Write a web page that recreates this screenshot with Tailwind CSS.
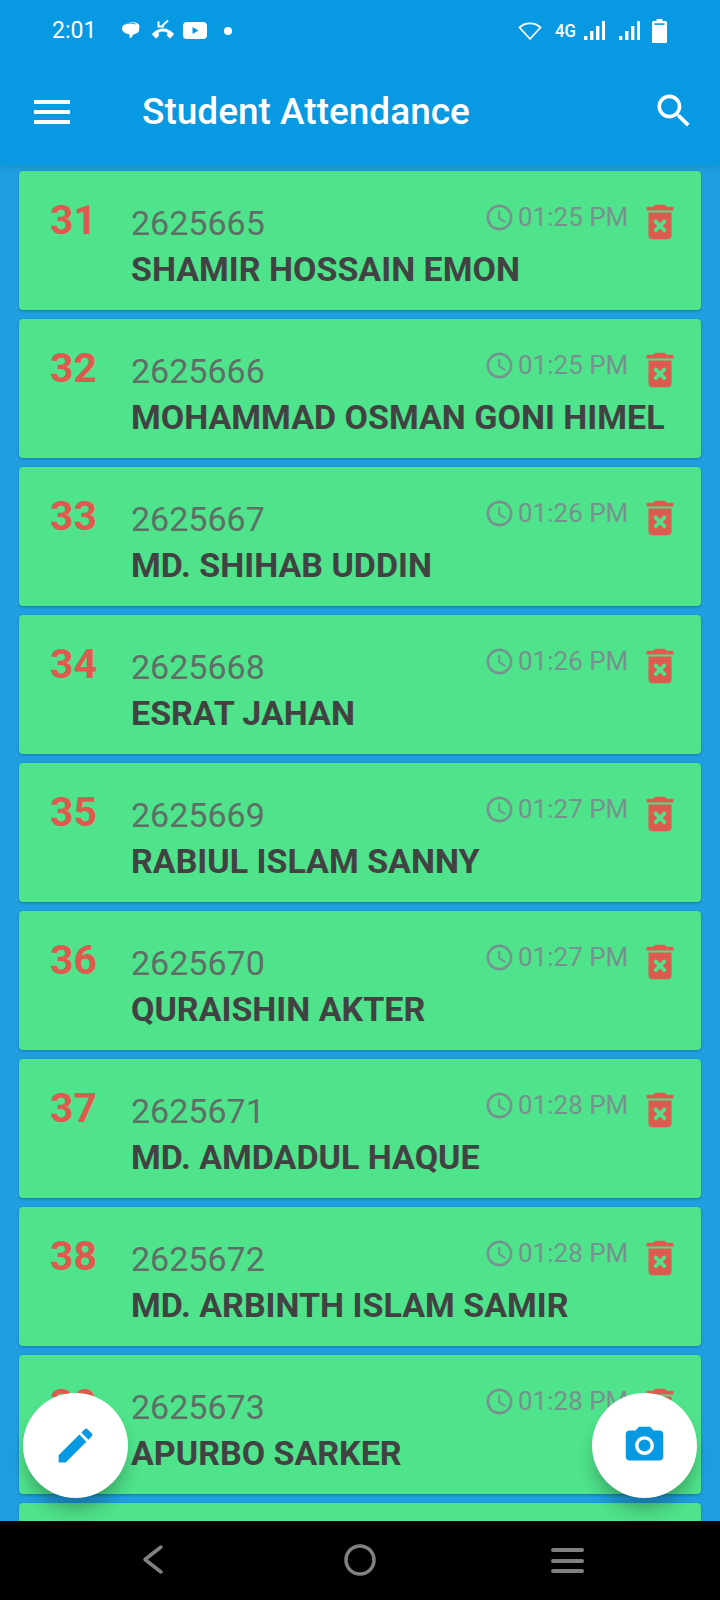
<!doctype html>
<html lang="en">
<head>
<meta charset="utf-8">
<title>Student Attendance</title>
<script src="https://cdn.jsdelivr.net/npm/@tailwindcss/browser@4"></script>
</head>
<body class="m-0">
<svg class="hidden" aria-hidden="true">
  <symbol id="clock" viewBox="0 0 24 24"><path d="M11.99 2C6.47 2 2 6.48 2 12s4.47 10 9.99 10C17.52 22 22 17.52 22 12S17.52 2 11.99 2zM12 20c-4.42 0-8-3.58-8-8s3.58-8 8-8 8 3.58 8 8-3.58 8-8 8zm.5-13H11v6l5.25 3.15.75-1.23-4.5-2.67z"/></symbol>
  <symbol id="trash" viewBox="0 0 24 24"><path d="M6 19c0 1.1.9 2 2 2h8c1.1 0 2-.9 2-2V7H6v12zm2.46-7.12l1.41-1.41L12 12.59l2.12-2.12 1.41 1.41L13.41 14l2.12 2.12-1.41 1.41L12 15.41l-2.12 2.12-1.41-1.41L10.59 14l-2.13-2.12zM15.5 4l-1-1h-5l-1 1H5v2h14V4z"/></symbol>
</svg>

<div class="relative flex h-[1600px] w-[720px] flex-col overflow-hidden bg-[#1f9fe2] font-['Roboto',sans-serif]">
  <!-- App bar with the system status row -->
  <header class="relative z-10 h-[165px] shrink-0 bg-[#0899e3] text-white shadow-[0_2px_6px_rgba(0,0,0,0.12)]">
    <div class="flex h-[60px] items-center justify-between pt-[1px] pl-[52px] pr-[53px]">
      <div class="flex items-center">
        <span class="w-[69px] text-[23px] leading-none">2:01</span>
        <svg class="h-[20px] w-[20px]" viewBox="0 0 20 20" fill="#fff"><path d="M9 1.5c4.6-.9 9 .6 9.5 3.6.2 1-.1 1.800-.6 2.500 1 3-1.500 5.300-5.400 5.800L9.800 17c-.6.5-1.100.3-1.100-.4l-.3-3.400C4 12.600 1 10.600 1 7.500 1 4.500 4.300 2.200 9 1.500z"/><path d="M4 3.200c2.500-1.300 7-1.600 10.500-.2" fill="none" stroke="#0899e3" stroke-width="1"/></svg>
        <svg class="ml-[10px] h-[24px] w-[24px]" viewBox="0 0 24 24" fill="#fff"><path d="M12 9.500c-4.200 0-7.800 2-10.600 5-.4.400-.4.900 0 1.300l3 3.200c.4.400.9.400 1.300 0l2-2c.3-.3.400-.6.300-1l-.6-2.300c1.500-.8 3-1.100 4.600-1.100s3.100.3 4.600 1.100l-.6 2.300c-.1.400 0 .7.300 1l2 2c.4.400.9.400 1.300 0l3-3.200c.4-.4.400-.9 0-1.300-2.800-3-6.400-5-10.600-5z"/><path d="M17 1.500l-6 5.500" fill="none" stroke="#fff" stroke-width="2"/><path d="M7.500 2.500v5h5.500" fill="none" stroke="#fff" stroke-width="2"/></svg>
        <svg class="ml-[8px] h-[17px] w-[24px]" viewBox="0 0 24 17"><rect width="24" height="17" rx="4" fill="#fff"/><path d="M9.500 5v7l6-3.500z" fill="#0899e3"/></svg>
        <span class="ml-[17px] h-[8px] w-[8px] rounded-full bg-white"></span>
      </div>
      <div class="flex items-center">
        <svg class="h-[20px] w-[24px]" viewBox="0 0 24 20" fill="none" stroke="#fff" stroke-width="1.800" stroke-linejoin="round"><path d="M1.500 6.500C7 .9 17 .9 22.500 6.500L12 18z"/></svg>
        <span class="ml-[13px] w-[21px] origin-left scale-x-[0.88] text-[19px] leading-none font-medium whitespace-nowrap">4G</span>
        <svg class="ml-[8px] h-[20px] w-[21px]" viewBox="0 0 21 20" fill="#fff"><rect x="0" y="15" width="3.400" height="4"/><rect x="6" y="10" width="3.400" height="9"/><rect x="12" y="5" width="3.400" height="14"/><rect x="18" y="0" width="3" height="19"/></svg>
        <svg class="ml-[14px] h-[20px] w-[21px]" viewBox="0 0 21 20" fill="#fff"><rect x="0" y="15" width="3.400" height="4"/><rect x="6" y="10" width="3.400" height="9"/><rect x="12" y="5" width="3.400" height="14"/><rect x="18" y="0" width="3" height="19"/></svg>
        <svg class="ml-[12px] h-[24px] w-[15px]" viewBox="0 0 15 24" fill="#fff"><path d="M4.500 0h6v2h3c.8 0 1.500.7 1.500 1.500V23c0 .6-.4 1-1 1H1c-.6 0-1-.4-1-1V3.500C0 2.700.7 2 1.500 2h3z"/><rect x="2.500" y="4.300" width="10" height="1.600" fill="#0899e3"/></svg>
      </div>
    </div>
    <div class="flex h-[105px] items-start pt-[27px]">
      <button class="ml-[34px] flex h-[50px] w-[36px] flex-col justify-center gap-[6.500px]" aria-label="Menu">
        <span class="h-[3.500px] w-full bg-white"></span><span class="h-[3.500px] w-full bg-white"></span><span class="h-[3.500px] w-full bg-white"></span>
      </button>
      <h1 class="ml-[72px] flex-1 text-[37px] leading-[50px] font-medium">Student Attendance</h1>
      <svg class="mt-[2px] mr-[24px] h-[44px] w-[44px]" viewBox="0 0 24 24" fill="#fff"><path d="M15.500 14h-.79l-.28-.27C15.410 12.590 16 11.110 16 9.500 16 5.910 13.090 3 9.500 3S3 5.910 3 9.500 5.910 16 9.500 16c1.610 0 3.090-.59 4.230-1.570l.27.280v.79l5 4.990L20.490 19l-4.990-5zm-6 0C7.010 14 5 11.990 5 9.500S7.010 5 9.500 5 14 7.010 14 9.500 11.990 14 9.500 14z"/></svg>
    </div>
  </header>

  <!-- Attendance list -->
  <main class="flex min-h-0 flex-1 flex-col gap-[9.500px] overflow-hidden px-[19px] pt-[6px]">
    <article class="grid h-[138.500px] shrink-0 grid-cols-[112px_1fr] rounded-[4px] bg-[#4fe38b] shadow-[0_1px_3px_rgba(0,0,0,0.25)]">
      <div class="pt-[26px] pl-[31px] text-[41px] leading-[46px] font-bold text-[#dd5a4f]">31</div>
      <div class="min-w-0 pt-[33px]">
        <div class="flex h-[40px] items-start justify-between pr-[18px]"><span class="text-[34px] leading-[38px] text-[#5f6f66]">2625665</span><span class="-mt-[3px] flex items-start"><svg class="mt-[1px] h-[31px] w-[31px] fill-[#77928e]"><use href="#clock"/></svg><span class="ml-[3px] w-[119px] text-[26px] leading-[33px] text-[#77928e]">01:25 PM</span><svg class="-mt-[2px] h-[46px] w-[46px] fill-[#dd5a4f]"><use href="#trash"/></svg></span></div>
        <div class="mt-[6px] text-[34px] leading-[38px] font-bold whitespace-nowrap text-[#424242]">SHAMIR HOSSAIN EMON</div>
      </div>
    </article>
    <article class="grid h-[138.500px] shrink-0 grid-cols-[112px_1fr] rounded-[4px] bg-[#4fe38b] shadow-[0_1px_3px_rgba(0,0,0,0.25)]">
      <div class="pt-[26px] pl-[31px] text-[41px] leading-[46px] font-bold text-[#dd5a4f]">32</div>
      <div class="min-w-0 pt-[33px]">
        <div class="flex h-[40px] items-start justify-between pr-[18px]"><span class="text-[34px] leading-[38px] text-[#5f6f66]">2625666</span><span class="-mt-[3px] flex items-start"><svg class="mt-[1px] h-[31px] w-[31px] fill-[#77928e]"><use href="#clock"/></svg><span class="ml-[3px] w-[119px] text-[26px] leading-[33px] text-[#77928e]">01:25 PM</span><svg class="-mt-[2px] h-[46px] w-[46px] fill-[#dd5a4f]"><use href="#trash"/></svg></span></div>
        <div class="mt-[6px] text-[34px] leading-[38px] font-bold whitespace-nowrap text-[#424242]">MOHAMMAD OSMAN GONI HIMEL</div>
      </div>
    </article>
    <article class="grid h-[138.500px] shrink-0 grid-cols-[112px_1fr] rounded-[4px] bg-[#4fe38b] shadow-[0_1px_3px_rgba(0,0,0,0.25)]">
      <div class="pt-[26px] pl-[31px] text-[41px] leading-[46px] font-bold text-[#dd5a4f]">33</div>
      <div class="min-w-0 pt-[33px]">
        <div class="flex h-[40px] items-start justify-between pr-[18px]"><span class="text-[34px] leading-[38px] text-[#5f6f66]">2625667</span><span class="-mt-[3px] flex items-start"><svg class="mt-[1px] h-[31px] w-[31px] fill-[#77928e]"><use href="#clock"/></svg><span class="ml-[3px] w-[119px] text-[26px] leading-[33px] text-[#77928e]">01:26 PM</span><svg class="-mt-[2px] h-[46px] w-[46px] fill-[#dd5a4f]"><use href="#trash"/></svg></span></div>
        <div class="mt-[6px] text-[34px] leading-[38px] font-bold whitespace-nowrap text-[#424242]">MD. SHIHAB UDDIN</div>
      </div>
    </article>
    <article class="grid h-[138.500px] shrink-0 grid-cols-[112px_1fr] rounded-[4px] bg-[#4fe38b] shadow-[0_1px_3px_rgba(0,0,0,0.25)]">
      <div class="pt-[26px] pl-[31px] text-[41px] leading-[46px] font-bold text-[#dd5a4f]">34</div>
      <div class="min-w-0 pt-[33px]">
        <div class="flex h-[40px] items-start justify-between pr-[18px]"><span class="text-[34px] leading-[38px] text-[#5f6f66]">2625668</span><span class="-mt-[3px] flex items-start"><svg class="mt-[1px] h-[31px] w-[31px] fill-[#77928e]"><use href="#clock"/></svg><span class="ml-[3px] w-[119px] text-[26px] leading-[33px] text-[#77928e]">01:26 PM</span><svg class="-mt-[2px] h-[46px] w-[46px] fill-[#dd5a4f]"><use href="#trash"/></svg></span></div>
        <div class="mt-[6px] text-[34px] leading-[38px] font-bold whitespace-nowrap text-[#424242]">ESRAT JAHAN</div>
      </div>
    </article>
    <article class="grid h-[138.500px] shrink-0 grid-cols-[112px_1fr] rounded-[4px] bg-[#4fe38b] shadow-[0_1px_3px_rgba(0,0,0,0.25)]">
      <div class="pt-[26px] pl-[31px] text-[41px] leading-[46px] font-bold text-[#dd5a4f]">35</div>
      <div class="min-w-0 pt-[33px]">
        <div class="flex h-[40px] items-start justify-between pr-[18px]"><span class="text-[34px] leading-[38px] text-[#5f6f66]">2625669</span><span class="-mt-[3px] flex items-start"><svg class="mt-[1px] h-[31px] w-[31px] fill-[#77928e]"><use href="#clock"/></svg><span class="ml-[3px] w-[119px] text-[26px] leading-[33px] text-[#77928e]">01:27 PM</span><svg class="-mt-[2px] h-[46px] w-[46px] fill-[#dd5a4f]"><use href="#trash"/></svg></span></div>
        <div class="mt-[6px] text-[34px] leading-[38px] font-bold whitespace-nowrap text-[#424242]">RABIUL ISLAM SANNY</div>
      </div>
    </article>
    <article class="grid h-[138.500px] shrink-0 grid-cols-[112px_1fr] rounded-[4px] bg-[#4fe38b] shadow-[0_1px_3px_rgba(0,0,0,0.25)]">
      <div class="pt-[26px] pl-[31px] text-[41px] leading-[46px] font-bold text-[#dd5a4f]">36</div>
      <div class="min-w-0 pt-[33px]">
        <div class="flex h-[40px] items-start justify-between pr-[18px]"><span class="text-[34px] leading-[38px] text-[#5f6f66]">2625670</span><span class="-mt-[3px] flex items-start"><svg class="mt-[1px] h-[31px] w-[31px] fill-[#77928e]"><use href="#clock"/></svg><span class="ml-[3px] w-[119px] text-[26px] leading-[33px] text-[#77928e]">01:27 PM</span><svg class="-mt-[2px] h-[46px] w-[46px] fill-[#dd5a4f]"><use href="#trash"/></svg></span></div>
        <div class="mt-[6px] text-[34px] leading-[38px] font-bold whitespace-nowrap text-[#424242]">QURAISHIN AKTER</div>
      </div>
    </article>
    <article class="grid h-[138.500px] shrink-0 grid-cols-[112px_1fr] rounded-[4px] bg-[#4fe38b] shadow-[0_1px_3px_rgba(0,0,0,0.25)]">
      <div class="pt-[26px] pl-[31px] text-[41px] leading-[46px] font-bold text-[#dd5a4f]">37</div>
      <div class="min-w-0 pt-[33px]">
        <div class="flex h-[40px] items-start justify-between pr-[18px]"><span class="text-[34px] leading-[38px] text-[#5f6f66]">2625671</span><span class="-mt-[3px] flex items-start"><svg class="mt-[1px] h-[31px] w-[31px] fill-[#77928e]"><use href="#clock"/></svg><span class="ml-[3px] w-[119px] text-[26px] leading-[33px] text-[#77928e]">01:28 PM</span><svg class="-mt-[2px] h-[46px] w-[46px] fill-[#dd5a4f]"><use href="#trash"/></svg></span></div>
        <div class="mt-[6px] text-[34px] leading-[38px] font-bold whitespace-nowrap text-[#424242]">MD. AMDADUL HAQUE</div>
      </div>
    </article>
    <article class="grid h-[138.500px] shrink-0 grid-cols-[112px_1fr] rounded-[4px] bg-[#4fe38b] shadow-[0_1px_3px_rgba(0,0,0,0.25)]">
      <div class="pt-[26px] pl-[31px] text-[41px] leading-[46px] font-bold text-[#dd5a4f]">38</div>
      <div class="min-w-0 pt-[33px]">
        <div class="flex h-[40px] items-start justify-between pr-[18px]"><span class="text-[34px] leading-[38px] text-[#5f6f66]">2625672</span><span class="-mt-[3px] flex items-start"><svg class="mt-[1px] h-[31px] w-[31px] fill-[#77928e]"><use href="#clock"/></svg><span class="ml-[3px] w-[119px] text-[26px] leading-[33px] text-[#77928e]">01:28 PM</span><svg class="-mt-[2px] h-[46px] w-[46px] fill-[#dd5a4f]"><use href="#trash"/></svg></span></div>
        <div class="mt-[6px] text-[34px] leading-[38px] font-bold whitespace-nowrap text-[#424242]">MD. ARBINTH ISLAM SAMIR</div>
      </div>
    </article>
    <article class="grid h-[138.500px] shrink-0 grid-cols-[112px_1fr] rounded-[4px] bg-[#4fe38b] shadow-[0_1px_3px_rgba(0,0,0,0.25)]">
      <div class="pt-[26px] pl-[31px] text-[41px] leading-[46px] font-bold text-[#dd5a4f]">39</div>
      <div class="min-w-0 pt-[33px]">
        <div class="flex h-[40px] items-start justify-between pr-[18px]"><span class="text-[34px] leading-[38px] text-[#5f6f66]">2625673</span><span class="-mt-[3px] flex items-start"><svg class="mt-[1px] h-[31px] w-[31px] fill-[#77928e]"><use href="#clock"/></svg><span class="ml-[3px] w-[119px] text-[26px] leading-[33px] text-[#77928e]">01:28 PM</span><svg class="-mt-[2px] h-[46px] w-[46px] fill-[#dd5a4f]"><use href="#trash"/></svg></span></div>
        <div class="mt-[6px] text-[34px] leading-[38px] font-bold whitespace-nowrap text-[#424242]">APURBO SARKER</div>
      </div>
    </article>
    <article class="h-[138.500px] shrink-0 rounded-[4px] bg-[#4fe38b] shadow-[0_1px_3px_rgba(0,0,0,0.25)]"></article>
  </main>

  <!-- Android navigation bar -->
  <nav class="relative z-10 h-[79px] shrink-0 bg-black">
    <svg class="absolute top-[23px] left-[141px] h-[32px] w-[24px]" viewBox="0 0 24 32" fill="none" stroke="#808080" stroke-width="3.500" stroke-linecap="round" stroke-linejoin="round"><path d="M20 3L4 15.500 20 28"/></svg>
    <svg class="absolute top-[23px] left-[344px] h-[32px] w-[32px]" viewBox="0 0 32 32" fill="none" stroke="#808080" stroke-width="3.500"><circle cx="16" cy="16" r="14"/></svg>
    <div class="absolute top-[27px] left-[551px] flex h-[25px] w-[33px] flex-col justify-between">
      <span class="h-[4px] rounded-full bg-[#808080]"></span><span class="h-[4px] rounded-full bg-[#808080]"></span><span class="h-[4px] rounded-full bg-[#808080]"></span>
    </div>
  </nav>

  <!-- Floating action buttons -->
  <button class="absolute top-[1393px] left-[23px] z-20 flex h-[105px] w-[105px] items-center justify-center rounded-full bg-white shadow-[0_14px_18px_-4px_rgba(0,0,0,0.3)]" aria-label="Edit">
    <svg class="h-[45px] w-[45px] fill-[#0899e3]" viewBox="0 0 24 24"><path d="M3 17.250V21h3.750L17.810 9.940l-3.750-3.750L3 17.250zM20.710 7.040c.39-.39.39-1.020 0-1.410l-2.340-2.340c-.39-.39-1.020-.39-1.410 0l-1.830 1.830 3.750 3.750 1.830-1.830z"/></svg>
  </button>
  <button class="absolute top-[1393px] left-[592px] z-20 flex h-[105px] w-[105px] items-center justify-center rounded-full bg-white shadow-[0_14px_18px_-4px_rgba(0,0,0,0.3)]" aria-label="Camera">
    <svg class="h-[45px] w-[45px] fill-[#0899e3]" viewBox="0 0 24 24"><circle cx="12" cy="12" r="3.200"/><path d="M9 2L7.170 4H4c-1.100 0-2 .9-2 2v12c0 1.100.9 2 2 2h16c1.100 0 2-.9 2-2V6c0-1.100-.9-2-2-2h-3.170L15 2H9zm3 15c-2.760 0-5-2.240-5-5s2.240-5 5-5 5 2.240 5 5-2.240 5-5 5z"/></svg>
  </button>
</div>
</body>
</html>
